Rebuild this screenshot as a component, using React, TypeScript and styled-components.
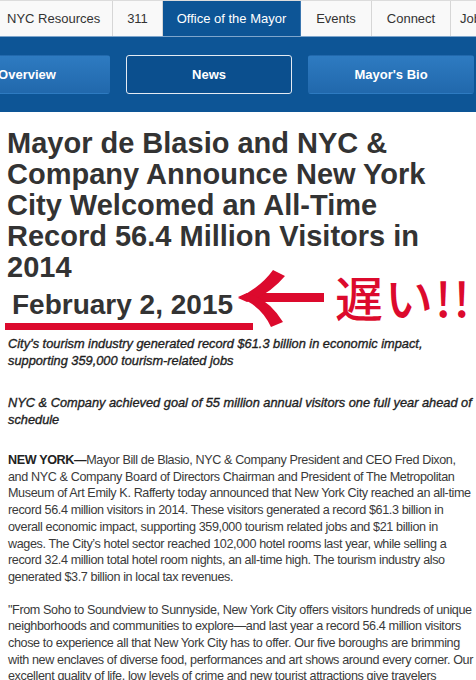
import React from "react";
import styled, { createGlobalStyle } from "styled-components";

const GlobalStyle = createGlobalStyle`
  html, body { margin: 0; padding: 0; background: #ffffff; }
  body { font-family: "Liberation Sans", Arial, sans-serif; overflow: hidden; }
  * { box-sizing: border-box; }
`;

const Page = styled.div`
  width: 476px;
  height: 680px;
  overflow: hidden;
  position: relative;
`;

const TopNav = styled.nav`
  display: flex;
  height: 37px;
  border-top: 1px solid #dcdcdc;
  border-bottom: 1px solid #7fa6cc;
  background: #f9f9f9;
  white-space: nowrap;
`;

const Tab = styled.div<{ $w: number; $active?: boolean; $pl?: number }>`
  flex: 0 0 ${(p) => p.$w}px;
  display: flex;
  align-items: center;
  justify-content: ${(p) => (p.$pl !== undefined ? "flex-start" : "center")};
  padding-left: ${(p) => p.$pl ?? 0}px;
  font-size: 13px;
  color: ${(p) => (p.$active ? "#ffffff" : "#333333")};
  background: ${(p) => (p.$active ? "#0d5596" : "transparent")};
  border-right: 1px solid ${(p) => (p.$active ? "#3a76b0" : "#d6d6d6")};
  overflow: hidden;
`;

const Band = styled.div`
  background: #0d5596;
  height: 75px;
  padding-top: 18px;
  display: flex;
  gap: 16px;
`;

const BandButton = styled.div<{ $active?: boolean; $offset?: number }>`
  flex: 0 0 166px;
  height: 39px;
  margin-left: ${(p) => p.$offset ?? 0}px;
  border-radius: 3px;
  display: flex;
  align-items: center;
  justify-content: center;
  color: #ffffff;
  font-weight: bold;
  font-size: 13px;
  background: ${(p) =>
    p.$active ? "#0b4f8e" : "linear-gradient(#2e7bc1, #2168ac)"};
  border: 1px solid ${(p) => (p.$active ? "#e4ebf3" : "transparent")};
`;

const Headline = styled.h1`
  margin: 16px 0 0 0;
  padding: 0 14px 0 7px;
  font-size: 29px;
  line-height: 31px;
  font-weight: bold;
  color: #333333;
`;

const DateBlock = styled.div`
  position: relative;
  margin-top: 6px;
`;

const DateText = styled.div`
  padding-left: 12px;
  font-size: 28px;
  line-height: 32px;
  font-weight: bold;
  color: #333333;
`;

const Underline = styled.div`
  margin: 2px 0 0 5px;
  width: 248px;
  height: 7px;
  background: #dc0a2d;
`;

const Annotation = styled.div`
  position: absolute;
  left: 235px;
  top: -22px;
  display: flex;
  align-items: flex-start;
`;

const Shout = styled.div`
  margin: 5px 0 0 8px;
  font-family: "Noto Sans CJK JP", sans-serif;
  font-size: 48px;
  line-height: 48px;
  font-weight: 500;
  letter-spacing: 2px;
  color: #dc0a2d;
  white-space: nowrap;
`;

const Lead = styled.p<{ $mt: number }>`
  margin: ${(p) => p.$mt}px 0 0 0;
  padding: 0 2px 0 8px;
  font-size: 12.8px;
  line-height: 17px;
  font-style: italic;
  color: #1e1e1e;
  -webkit-text-stroke: 0.35px #1e1e1e;
`;

const Body = styled.p<{ $mt: number }>`
  margin: ${(p) => p.$mt}px 0 0 0;
  padding: 0 0 0 8px;
  font-size: 12.6px;
  letter-spacing: -0.38px;
  line-height: 16.7px;
  white-space: nowrap;
  color: #3a3a3a;
  strong { color: #222222; }
`;

const Arrow = () => (
  <svg width="92" height="62" viewBox="0 0 92 62">
    <rect x="20" y="26" width="69" height="9" fill="#dc0a2d" />
    <path d="M3 31 Q26 20 38 3 L50 9 Q34 28 12 35 Z" fill="#dc0a2d" />
    <path d="M3 30 Q26 38 36 60 L48 55 Q34 32 12 26 Z" fill="#dc0a2d" />
  </svg>
);

export default function App() {
  return (
    <Page>
      <GlobalStyle />
      <TopNav>
        <Tab $w={113} $pl={7}>NYC Resources</Tab>
        <Tab $w={50}>311</Tab>
        <Tab $w={138} $active>Office of the Mayor</Tab>
        <Tab $w={71}>Events</Tab>
        <Tab $w={79}>Connect</Tab>
        <Tab $w={60} $pl={9}>Jobs</Tab>
      </TopNav>
      <Band>
        <BandButton $offset={-56}>Overview</BandButton>
        <BandButton $active>News</BandButton>
        <BandButton>Mayor's Bio</BandButton>
      </Band>
      <Headline>
        Mayor de Blasio and NYC &amp; Company Announce New York City Welcomed an
        All-Time Record 56.4 Million Visitors in 2014
      </Headline>
      <DateBlock>
        <DateText>February 2, 2015</DateText>
        <Underline />
        <Annotation>
          <Arrow />
          <Shout>遅い!!</Shout>
        </Annotation>
      </DateBlock>
      <Lead $mt={5}>
        City’s tourism industry generated record $61.3 billion in economic
        impact, supporting 359,000 tourism-related jobs
      </Lead>
      <Lead $mt={25}>
        NYC &amp; Company achieved goal of 55 million annual visitors one full
        year ahead of schedule
      </Lead>
      <Body $mt={24}>
        <strong>NEW YORK—</strong>Mayor Bill de Blasio, NYC &amp; Company President and CEO Fred Dixon,
        <br />
        and NYC &amp; Company Board of Directors Chairman and President of The Metropolitan
        <br />
        Museum of Art Emily K. Rafferty today announced that New York City reached an all-time
        <br />
        record 56.4 million visitors in 2014. These visitors generated a record $61.3 billion in
        <br />
        overall economic impact, supporting 359,000 tourism related jobs and $21 billion in
        <br />
        wages. The City’s hotel sector reached 102,000 hotel rooms last year, while selling a
        <br />
        record 32.4 million total hotel room nights, an all-time high. The tourism industry also
        <br />
        generated $3.7 billion in local tax revenues.
      </Body>
      <Body $mt={16}>
        "From Soho to Soundview to Sunnyside, New York City offers visitors hundreds of unique
        <br />
        neighborhoods and communities to explore—and last year a record 56.4 million visitors
        <br />
        chose to experience all that New York City has to offer. Our five boroughs are brimming
        <br />
        with new enclaves of diverse food, performances and art shows around every corner. Our
        <br />
        excellent quality of life, low levels of crime and new tourist attractions give travelers
      </Body>
    </Page>
  );
}
